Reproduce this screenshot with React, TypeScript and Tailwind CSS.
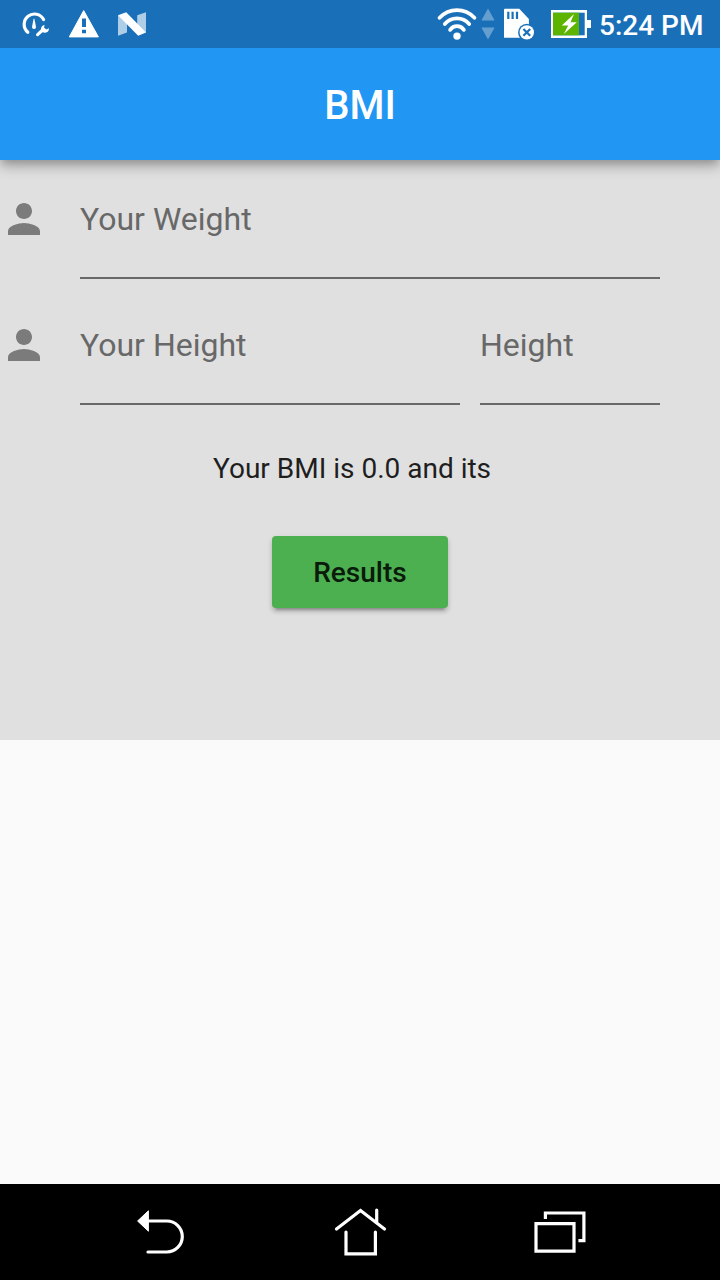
import React from "react";

function ToolsIcon() {
  return (
    <svg className="h-8 w-8" viewBox="20 8 32 32" fill="none">
      <path d="M27.8 32.2A10.3 10.3 0 1 1 43.6 19.6" stroke="#fff" strokeWidth="3.2" strokeLinecap="round" />
      <path d="M33.6 18.8h.8L36 26.9a2 2 0 1 1-4 0Z" fill="#fff" />
      <path d="M37.6 34.6 42.6 30" stroke="#fff" strokeWidth="3.1" strokeLinecap="round" />
      <path d="M44.6 24.9a4 4 0 0 0-3.3 5.5 4 4 0 0 0 7.6-2.1l-2.6 1.3-2.3-2.1z" fill="#fff" />
    </svg>
  );
}

function WarningIcon() {
  return (
    <svg className="h-8 w-8" viewBox="68 8 32 32">
      <path d="M83.7 10.6 98.4 36.9H69.3Z" fill="#fff" stroke="#fff" strokeWidth="1" strokeLinejoin="round" />
      <path d="M82 18.4h4v8.6h-4zM82 29.7h4v3.6h-4z" fill="#1a70b8" />
    </svg>
  );
}

function NougatIcon() {
  return (
    <svg className="h-8 w-8" viewBox="116 8 32 32">
      <path d="M118 15.2 127 19v13.5L118 35.7zM137.2 15.2 146 12.2v20.6l-8.8-4z" fill="#aecde6" />
      <path d="M118 15.2 126.2 12.3 146 32.6 138.2 35.8z" fill="#fff" />
    </svg>
  );
}

function WifiIcon() {
  return (
    <svg className="h-10 w-10" viewBox="437 4 40 40" fill="none" stroke="#fff" strokeWidth="3.7" strokeLinecap="round">
      <path d="M439.6 17.8Q446.8 10.2 457 10.2T474.4 17.8" />
      <path d="M444.8 24Q449.7 18.4 457 18.4T469.2 24" />
      <path d="M450.1 29.9Q452.7 26.2 457 26.2T463.9 29.9" />
      <circle cx="457" cy="36.1" r="3.7" fill="#fff" stroke="none" />
    </svg>
  );
}

function TrafficIcon() {
  return (
    <svg className="ml-[3px] h-10 w-4" viewBox="480 4 16 40">
      <path d="M488 8.4 494.6 20.6H481.4zM488 39.4 494.6 27.4H481.4z" fill="#659fd0" />
    </svg>
  );
}

function SdCardIcon() {
  return (
    <svg className="h-10 w-8" viewBox="503 4 32 40">
      <path d="M504 9.6q0-.9.9-.9H519.3L528.9 19V37.8H504.9q-.9 0-.9-.9z" fill="#fff" />
      <path d="M507.2 11.8h2.2v7.3h-2.2zM511.5 11.8h2.2v7.3h-2.2zM515.9 11.8h2.2v7.3h-2.2z" fill="#1a70b8" />
      <circle cx="526.8" cy="32.4" r="8.7" fill="#1a70b8" />
      <circle cx="526.8" cy="32.4" r="7.2" fill="#fff" />
      <path d="m523.4 29 6.8 6.8m0-6.8-6.8 6.8" stroke="#1a70b8" strokeWidth="2.2" />
    </svg>
  );
}

function BatteryIcon() {
  return (
    <svg className="h-10 w-10" viewBox="551 4 40 40">
      <path d="M551 10h36v10h4v8h-4v10h-36z" fill="#fff" />
      <path d="M553 12.7h31.7v22.6H553z" fill="#1a70b8" />
      <path d="M553 12.7h26v22.6h-26z" fill="#5cb400" />
      <path d="M574 14 561.8 25.6h6.4L563.8 34 576.8 22.2h-6.3z" fill="#fff" />
    </svg>
  );
}

function PersonIcon() {
  return (
    <svg className="mt-[-5px] h-12 w-12" viewBox="0 0 24 24" fill="#7b7b7b">
      <path d="M12 12c2.21 0 4-1.79 4-4s-1.79-4-4-4-4 1.79-4 4 1.79 4 4 4zm0 2c-2.67 0-8 1.34-8 4v2h16v-2c0-2.66-5.33-4-8-4z" />
    </svg>
  );
}

function Field({ label, width }: { label: string; width: string }) {
  return (
    <div className={`${width} h-[79px] border-b-2 border-[#686868] text-[32px] leading-[38px] text-[#686868]`}>
      {label}
    </div>
  );
}

export default function App() {
  return (
    <div className="flex h-[1280px] w-[720px] flex-col overflow-hidden bg-[#fafafa] font-['Roboto',sans-serif]">
      <header className="relative z-10 shrink-0 shadow-[0_4px_8px_-2px_rgba(0,0,0,0.2),0_8px_10px_rgba(0,0,0,0.14),0_2px_20px_rgba(0,0,0,0.12)]">
        <div className="flex h-12 items-center bg-[#1a70b8] pl-5">
          <div className="flex gap-4">
            <ToolsIcon />
            <WarningIcon />
            <NougatIcon />
          </div>
          <div className="ml-auto flex items-center">
            <WifiIcon />
            <TrafficIcon />
            <span className="w-[7px]" />
            <SdCardIcon />
            <span className="w-4" />
            <BatteryIcon />
            <span className="ml-2 mr-4 mt-1 w-[105px] whitespace-nowrap text-[28px] font-medium leading-none text-white">
              5:24 PM
            </span>
          </div>
        </div>
        <div className="flex h-28 items-center justify-center bg-[#2196f3]">
          <h1 className="mt-[2px] text-[40px] font-medium leading-[47px] text-white">BMI</h1>
        </div>
      </header>

      <main className="flex h-[580px] shrink-0 flex-col bg-[#e0e0e0] pt-10">
        <div className="flex gap-8">
          <PersonIcon />
          <Field label="Your Weight" width="w-[580px]" />
        </div>
        <div className="mt-[47px] flex gap-8">
          <PersonIcon />
          <div className="flex gap-5">
            <Field label="Your Height" width="w-[380px]" />
            <Field label="Height" width="w-[180px]" />
          </div>
        </div>
        <p className="mt-[47px] pl-[213px] text-[28px] leading-[33px] text-[#1e1e1e]">Your BMI is 0.0 and its</p>
        <button className="mx-auto mt-[51px] h-[72px] w-44 rounded-[4px] bg-[#4caf50] text-[28px] font-medium leading-[33px] text-[#0a1a0b] shadow-[0_6px_2px_-4px_rgba(0,0,0,0.2),0_4px_4px_rgba(0,0,0,0.14),0_2px_6px_rgba(0,0,0,0.1)]">
          Results
        </button>
      </main>

      <nav className="mt-auto flex h-24 shrink-0 items-center bg-black pl-[134px]">
        <svg className="h-[60px] w-[60px]" viewBox="134 1202 60 60" fill="none">
          <path d="M148 1221h18.8a15.5 15.5 0 0 1 0 31H148" stroke="#fff" strokeWidth="3.2" strokeLinecap="round" />
          <path d="M137.6 1221 148.4 1210.8v20.4z" fill="#fff" stroke="#fff" strokeWidth="1" strokeLinejoin="round" />
        </svg>
        <svg className="ml-[136px] h-[60px] w-[60px]" viewBox="330 1202 60 60" fill="none" stroke="#fff" strokeWidth="3.2" strokeLinecap="round">
          <path d="M336.5 1229 360.5 1210.5 384.5 1229M376.7 1210v12M346 1232v21.8h29.4V1232" />
        </svg>
        <svg className="ml-[140px] h-[60px] w-[60px]" viewBox="530 1202 60 60" fill="none" stroke="#fff" strokeWidth="3.2">
          <path d="M536 1223.6h38v27.6h-38zM545.4 1219v-6h38.5v27.6h-5.5" />
        </svg>
      </nav>
    </div>
  );
}
